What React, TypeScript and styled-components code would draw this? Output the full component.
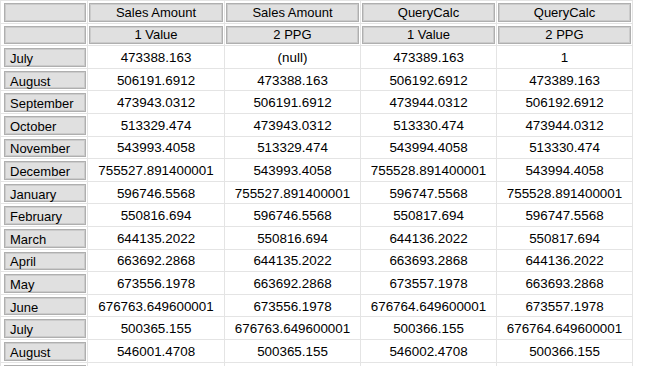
import React from "react";
import styled, { createGlobalStyle } from "styled-components";

const GlobalStyle = createGlobalStyle`
  html, body {
    margin: 0;
    padding: 0;
    background: #ffffff;
    overflow: hidden;
  }
  body {
    font-family: "Liberation Sans", Arial, sans-serif;
  }
`;

// сетка: линии рисуются фоном контейнера через gap
const Grid = styled.div`
  display: inline-grid;
  grid-template-columns: 86px 136px 135px 135px 135px;
  grid-auto-rows: 21.6px;
  gap: 1px;
  padding: 1px 1px 0 1px;
  background: #e4e4e4;
`;

const Cell = styled.div<{ $head?: boolean; $first?: boolean }>`
  background: #ffffff;
  display: flex;
  align-items: stretch;
  padding: ${({ $head, $first }) =>
    $head ? ($first ? "2px 1px 1px 3px" : "2px 1px 1px 1px") : "0"};
  overflow: hidden;
  min-width: 0;
`;

const HeadBox = styled.div<{ $align: "left" | "center" }>`
  flex: 1;
  box-sizing: border-box;
  background: #e0e0e0;
  border: 1px solid #afafaf;
  box-shadow: inset 0 0 0 1px #cbcbcb;
  display: flex;
  align-items: center;
  justify-content: ${({ $align }) => ($align === "left" ? "flex-start" : "center")};
  padding: ${({ $align }) => ($align === "left" ? "2px 0 0 5px" : "0")};
  font-size: 13px;
  color: #000000;
  white-space: nowrap;
`;

const Value = styled.div`
  flex: 1;
  display: flex;
  align-items: center;
  justify-content: center;
  font-size: 13.4px;
  color: #000000;
  white-space: nowrap;
  padding-top: 1px;
`;

const months = [
  ["July", "473388.163"],
  ["August", "506191.6912"],
  ["September", "473943.0312"],
  ["October", "513329.474"],
  ["November", "543993.4058"],
  ["December", "755527.891400001"],
  ["January", "596746.5568"],
  ["February", "550816.694"],
  ["March", "644135.2022"],
  ["April", "663692.2868"],
  ["May", "673556.1978"],
  ["June", "676763.649600001"],
  ["July", "500365.155"],
  ["August", "546001.4708"],
];

// QueryCalc = Sales Amount + 1
const bump = (v: string) => {
  const [i, f] = v.split(".");
  return `${Number(i) + 1}${f ? "." + f : ""}`;
};

const rows = months.map(([label, sales], idx) => {
  const prev = idx > 0 ? months[idx - 1][1] : null;
  return {
    label,
    cells: [
      sales,
      prev ?? "(null)",
      bump(sales),
      prev ? bump(prev) : "1",
    ],
  };
});

const headers = [
  ["Sales Amount", "Sales Amount", "QueryCalc", "QueryCalc"],
  ["1 Value", "2 PPG", "1 Value", "2 PPG"],
];

const App: React.FC = () => (
  <>
    <GlobalStyle />
    <Grid>
      {headers.map((h, r) => (
        <React.Fragment key={"h" + r}>
          <Cell $head $first>
            <HeadBox $align="left" />
          </Cell>
          {h.map((t, c) => (
            <Cell $head key={c}>
              <HeadBox $align="center">{t}</HeadBox>
            </Cell>
          ))}
        </React.Fragment>
      ))}
      {rows.map((row, r) => (
        <React.Fragment key={"r" + r}>
          <Cell $head $first>
            <HeadBox $align="left">{row.label}</HeadBox>
          </Cell>
          {row.cells.map((v, c) => (
            <Cell key={c}>
              <Value>{v}</Value>
            </Cell>
          ))}
        </React.Fragment>
      ))}
      {/* следующая строка, обрезанная краем окна */}
      <Cell $head $first>
        <HeadBox $align="left" />
      </Cell>
      {[0, 1, 2, 3].map((c) => (
        <Cell key={c} />
      ))}
    </Grid>
  </>
);

export default App;
